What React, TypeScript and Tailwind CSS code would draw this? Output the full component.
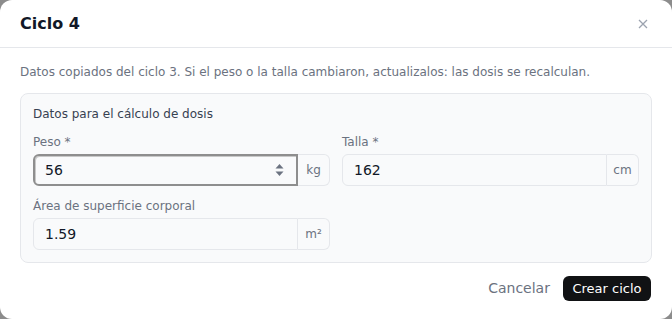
import { type ReactNode } from 'react';

const font = { fontFamily: '"DejaVu Sans", Verdana, sans-serif' };

function Field({
  label,
  value,
  unit,
  focused = false,
}: {
  label: string;
  value: string;
  unit: ReactNode;
  focused?: boolean;
}) {
  return (
    <div className="flex flex-col">
      <label className="mb-1 h-4 text-[12px] leading-4 text-[#6b7280]">{label}</label>
      <div className="flex h-8">
        <div
          className={
            focused
              ? 'relative flex flex-1 items-center rounded-l-md border-2 border-[#8e8e8e] bg-[#f9fafb] pl-[10px] shadow-[inset_1px_1px_0_#c8c8c8]'
              : 'relative flex flex-1 items-center rounded-l-md border border-[#e5e7eb] bg-[#f9fafb] pl-[11px]'
          }
        >
          <span className="text-[14px] text-[#111827]">{value}</span>
          {focused && (
            <svg
              className="absolute right-[12px] top-1/2 -translate-y-1/2"
              width="9"
              height="14"
              viewBox="0 0 9 14"
            >
              <path d="M4.5 1 L8.5 5.5 L0.5 5.5 Z" fill="#6b7280" />
              <path d="M4.5 13 L8.5 8.5 L0.5 8.5 Z" fill="#6b7280" />
            </svg>
          )}
        </div>
        <span className="flex w-8 items-center justify-center rounded-r-md border border-l-0 border-[#e5e7eb] bg-[#f9fafb] text-[12px] text-[#6b7280]">
          {unit}
        </span>
      </div>
    </div>
  );
}

export default function App() {
  return (
    <div className="h-[319px] w-[672px] bg-[#8c8c8c]" style={font}>
      <div className="flex h-full flex-col overflow-hidden rounded-xl bg-white">
        <header className="flex h-12 items-center justify-between border-b border-[#e5e7eb] px-5">
          <h2 className="text-[16px] font-bold text-[#111827]">Ciclo 4</h2>
          <button type="button" aria-label="Cerrar" className="mr-[4px] text-[#9ca3af]">
            <svg width="10" height="10" viewBox="0 0 10 10" stroke="currentColor" strokeWidth="1.3">
              <path d="M1 1 L9 9 M9 1 L1 9" />
            </svg>
          </button>
        </header>

        <div className="px-5 pt-4">
          <p className="h-4 text-[12px] leading-4 text-[#6b7280]">
            Datos copiados del ciclo 3. Si el peso o la talla cambiaron, actualizalos: las dosis se recalculan.
          </p>

          <section className="mt-[13px] rounded-lg border border-[#e5e7eb] bg-[#f9fafb] px-3 pb-3 pt-3">
            <h3 className="h-4 text-[12px] leading-4 text-[#374151]">Datos para el cálculo de dosis</h3>
            <div className="mt-3 grid grid-cols-2 gap-x-3 gap-y-3">
              <Field label="Peso *" value="56" unit="kg" focused />
              <Field label="Talla *" value="162" unit="cm" />
              <Field label="Área de superficie corporal" value="1.59" unit="m²" />
            </div>
          </section>
        </div>

        <footer className="mt-[13px] flex items-center justify-end gap-[13px] pr-[21px]">
          <button type="button" className="text-[14px] text-[#6b7280]">
            Cancelar
          </button>
          <button
            type="button"
            className="h-[25px] rounded-md bg-[#111214] px-[9.5px] text-[13px] text-white"
          >
            Crear ciclo
          </button>
        </footer>
      </div>
    </div>
  );
}
